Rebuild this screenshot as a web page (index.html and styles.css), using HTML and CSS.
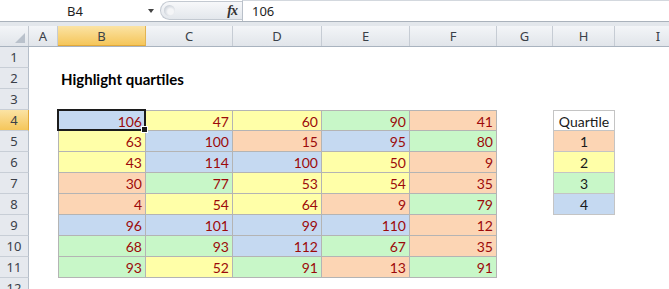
FILE: index.html
```html
<!DOCTYPE html>
<html lang="en">
<head>
    <meta charset="UTF-8">
    <title>Highlight quartiles</title>
    <link rel="stylesheet" href="styles.css">
</head>
<body>
    <div class="formula-bar">
        <div class="name-box">
            <span class="name">B4</span>
            <span class="drop"></span>
        </div>
        <div class="fx-box">
            <span class="grip"></span>
            <span class="fx">fx</span>
        </div>
        <div class="formula">106</div>
    </div>
    <div class="bar-gap"></div>

    <div class="col-headers">
        <div class="corner"><span class="corner-tri"></span></div>
        <div class="ch w-a">A</div>
        <div class="ch w-b active">B</div>
        <div class="ch w-c">C</div>
        <div class="ch w-d">D</div>
        <div class="ch w-e">E</div>
        <div class="ch w-f">F</div>
        <div class="ch w-g">G</div>
        <div class="ch w-h">H</div>
        <div class="ch w-i">I</div>
    </div>

    <div class="sheet">
        <div class="row-headers">
            <div class="rh">1</div>
            <div class="rh">2</div>
            <div class="rh">3</div>
            <div class="rh active">4</div>
            <div class="rh">5</div>
            <div class="rh">6</div>
            <div class="rh">7</div>
            <div class="rh">8</div>
            <div class="rh">9</div>
            <div class="rh">10</div>
            <div class="rh">11</div>
            <div class="rh">12</div>
        </div>

        <div class="cells">
            <div class="title">Highlight quartiles</div>

            <div class="data">
                <div class="cell q4 sel">106</div>
                <div class="cell q2">47</div>
                <div class="cell q2">60</div>
                <div class="cell q3">90</div>
                <div class="cell q1">41</div>

                <div class="cell q2">63</div>
                <div class="cell q4">100</div>
                <div class="cell q1">15</div>
                <div class="cell q4">95</div>
                <div class="cell q3">80</div>

                <div class="cell q2">43</div>
                <div class="cell q4">114</div>
                <div class="cell q4">100</div>
                <div class="cell q2">50</div>
                <div class="cell q1">9</div>

                <div class="cell q1">30</div>
                <div class="cell q3">77</div>
                <div class="cell q2">53</div>
                <div class="cell q2">54</div>
                <div class="cell q1">35</div>

                <div class="cell q1">4</div>
                <div class="cell q2">54</div>
                <div class="cell q2">64</div>
                <div class="cell q1">9</div>
                <div class="cell q3">79</div>

                <div class="cell q4">96</div>
                <div class="cell q4">101</div>
                <div class="cell q4">99</div>
                <div class="cell q4">110</div>
                <div class="cell q1">12</div>

                <div class="cell q3">68</div>
                <div class="cell q3">93</div>
                <div class="cell q4">112</div>
                <div class="cell q3">67</div>
                <div class="cell q1">35</div>

                <div class="cell q3">93</div>
                <div class="cell q2">52</div>
                <div class="cell q3">91</div>
                <div class="cell q1">13</div>
                <div class="cell q3">91</div>
            </div>

            <div class="legend">
                <div class="cell head">Quartile</div>
                <div class="cell q1">1</div>
                <div class="cell q2">2</div>
                <div class="cell q3">3</div>
                <div class="cell q4">4</div>
            </div>
        </div>
    </div>
</body>
</html>
```

FILE: styles.css
```css
body {
    margin: 0;
    padding: 0;
    width: 669px;
    height: 289px;
    overflow: hidden;
    background-color: #fff;
    font-family: "Noto Sans", "DejaVu Sans", sans-serif;
}

/* formula bar */
.formula-bar {
    display: flex;
    height: 21px;
    border-bottom: 1px solid #aab2bc;
    background-color: #fff;
}
.name-box {
    display: flex;
    align-items: center;
    width: 160px;
    font-size: 13px;
    color: #1e1e1e;
}
.name-box .name {
    flex: 1;
    text-align: center;
    padding-left: 2px;
}
.name-box .drop {
    width: 0;
    height: 0;
    margin-right: 6px;
    border-left: 3px solid transparent;
    border-right: 3px solid transparent;
    border-top: 4px solid #444;
}
.fx-box {
    display: flex;
    align-items: center;
    justify-content: space-between;
    width: 82px;
    margin: 1px 0;
    padding: 0 5px 0 3px;
    box-sizing: border-box;
    background: linear-gradient(#f7f8fa, #e3e7ec);
    border: 1px solid #c3c9d1;
    border-right: none;
    border-radius: 10px 0 0 10px;
}
.fx-box .grip {
    width: 11px;
    height: 11px;
    border-radius: 50%;
    background: radial-gradient(circle at 60% 60%, #f4f5f7 30%, #c8ced6 75%);
}
.fx-box .fx {
    font-family: "Liberation Serif", serif;
    font-style: italic;
    font-weight: bold;
    font-size: 14px;
    color: #333;
    letter-spacing: -1px;
}
.formula {
    flex: 1;
    display: flex;
    align-items: center;
    padding-left: 9px;
    border-left: 1px solid #b9c0c9;
    border-top: 1px solid #d3d8de;
    font-size: 13px;
    color: #1e1e1e;
}
.bar-gap {
    height: 4px;
    background-color: #e3e7ec;
}

/* column headers */
.col-headers {
    display: flex;
    height: 21px;
    box-sizing: border-box;
    border-bottom: 1px solid #a9b3bf;
    background: linear-gradient(#f3f5f8, #e1e5ea);
}
.corner {
    position: relative;
    width: 29px;
    flex: none;
    box-sizing: border-box;
    border-right: 1px solid #c2c8d0;
}
.corner-tri {
    position: absolute;
    right: 3px;
    bottom: 3px;
    width: 0;
    height: 0;
    border-left: 10px solid transparent;
    border-bottom: 10px solid #b9c1cb;
}
.ch {
    flex: none;
    box-sizing: border-box;
    border-right: 1px solid #c6ccd4;
    text-align: center;
    font-size: 13px;
    line-height: 20px;
    color: #3a4048;
}
.ch.active {
    background: linear-gradient(#fbe3a4, #f5c65a);
    border-bottom: 1px solid #e2a93a;
    border-right-color: #e2b453;
}
.w-a { width: 29px; }
.w-b { width: 88px; }
.w-c { width: 87px; }
.w-d { width: 89px; }
.w-e { width: 88px; }
.w-f { width: 87px; }
.w-g { width: 56px; }
.w-h { width: 62px; }
.w-i { width: 87px; }

/* sheet body */
.sheet {
    display: flex;
}
.row-headers {
    display: flex;
    flex-direction: column;
    width: 29px;
    flex: none;
}
.rh {
    height: 21px;
    box-sizing: border-box;
    border-bottom: 1px solid #c8ced6;
    border-right: 1px solid #b5bec9;
    background-color: #e6e9ee;
    text-align: center;
    font-size: 13px;
    line-height: 21px;
    color: #3a4048;
}
.rh.active {
    background: linear-gradient(#fbe3a4, #f5c65a);
    border-right-color: #e2a93a;
}
.cells {
    display: grid;
    grid-template-columns: 29px 88px 87px 89px 88px 87px 56px 62px 87px;
    grid-template-rows: repeat(12, 21px);
    font-family: "Lato", "Open Sans", sans-serif;
    font-size: 14px;
}
.title {
    grid-row: 2;
    grid-column: 2 / span 4;
    padding: 2px 0 0 3px;
    line-height: 19px;
    font-size: 15px;
    font-weight: bold;
    color: #000;
}

/* coloured blocks */
.data {
    grid-row: 4 / span 8;
    grid-column: 2 / span 5;
    display: grid;
    grid-template-columns: 87px 87px 89px 88px 87px;
    grid-template-rows: 20px repeat(7, 21px);
    border-top: 1px solid #b4b4b4;
    border-left: 1px solid #b4b4b4;
}
.legend {
    grid-row: 4 / span 5;
    grid-column: 8;
    display: grid;
    grid-template-columns: 61px;
    grid-template-rows: 20px repeat(4, 21px);
    border-top: 1px solid #c4c4c4;
    border-left: 1px solid #c4c4c4;
}
.cell {
    box-sizing: border-box;
    border-right: 1px solid #b4b4b4;
    border-bottom: 1px solid #b4b4b4;
    padding: 3px 3px 0 0;
    line-height: 16px;
    text-align: right;
    color: #9c0a0a;
}
.legend .cell {
    text-align: center;
    padding-right: 0;
    color: #1a1a1a;
    border-color: #c4c4c4;
}
.cell.head {
    background-color: #fff;
}
.q1 { background-color: #fcd5b4; }
.q2 { background-color: #ffffa8; }
.q3 { background-color: #c8f7c8; }
.q4 { background-color: #c5d9f1; }

/* active cell */
.cell.sel {
    position: relative;
}
.cell.sel::after {
    content: "";
    position: absolute;
    left: -2px;
    top: -2px;
    right: -1px;
    bottom: -1px;
    border: 2px solid #1c1c1c;
}
.cell.sel::before {
    content: "";
    position: absolute;
    right: -3px;
    bottom: -3px;
    width: 5px;
    height: 5px;
    background-color: #1c1c1c;
    border: 1px solid #fff;
    z-index: 1;
}
```
